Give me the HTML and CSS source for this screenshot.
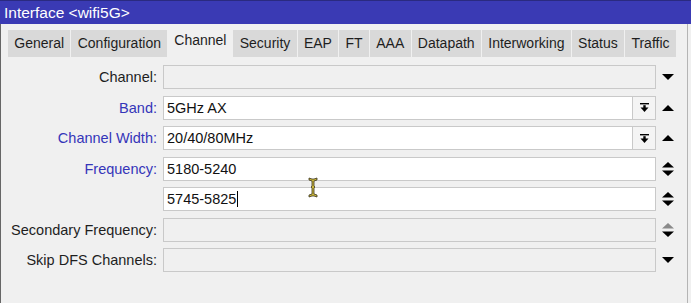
FILE: index.html
```html
<!DOCTYPE html>
<html>
  <head>
    <title>Interface &lt;wifi5G&gt;</title>
    <link rel="stylesheet" href="styles.css">
  </head>
  <body>
    <div class="titlebar">Interface &lt;wifi5G&gt;</div>

    <div class="window">
      <div class="tabs">
        <span class="tab">General</span>
        <span class="tab">Configuration</span>
        <span class="tab active">Channel</span>
        <span class="tab">Security</span>
        <span class="tab">EAP</span>
        <span class="tab">FT</span>
        <span class="tab">AAA</span>
        <span class="tab">Datapath</span>
        <span class="tab">Interworking</span>
        <span class="tab">Status</span>
        <span class="tab">Traffic</span>
      </div>

      <div class="form">
        <label>Channel:</label>
        <div class="field disabled"></div>
        <svg class="icon" viewBox="0 0 12 12"><polygon points="0,3 12,3 6,9" /></svg>

        <label class="blue">Band:</label>
        <div class="field">
          <span class="value">5GHz AX</span>
          <span class="drop">
            <svg viewBox="0 0 9 9"><rect x="0" y="0" width="9" height="1.4" /><rect x="3.3" y="2.2" width="2.4" height="3" /><polygon points="0.5,4.6 8.5,4.6 4.5,9" /></svg>
          </span>
        </div>
        <svg class="icon" viewBox="0 0 12 12"><polygon points="0,9 12,9 6,3" /></svg>

        <label class="blue">Channel Width:</label>
        <div class="field">
          <span class="value">20/40/80MHz</span>
          <span class="drop">
            <svg viewBox="0 0 9 9"><rect x="0" y="0" width="9" height="1.4" /><rect x="3.3" y="2.2" width="2.4" height="3" /><polygon points="0.5,4.6 8.5,4.6 4.5,9" /></svg>
          </span>
        </div>
        <svg class="icon" viewBox="0 0 12 12"><polygon points="0,9 12,9 6,3" /></svg>

        <label class="blue">Frequency:</label>
        <div class="field"><span class="value">5180-5240</span></div>
        <svg class="icon spin" viewBox="0 0 12 14"><polygon points="0,5.5 12,5.5 6,0" /><polygon points="0,8.5 12,8.5 6,14" /></svg>

        <label></label>
        <div class="field"><span class="value">5745-5825<i class="caret"></i></span></div>
        <svg class="icon spin" viewBox="0 0 12 14"><polygon points="0,5.5 12,5.5 6,0" /><polygon points="0,8.5 12,8.5 6,14" /></svg>

        <label>Secondary Frequency:</label>
        <div class="field disabled"></div>
        <svg class="icon spin" viewBox="0 0 12 14"><polygon class="dim" points="0,5.5 12,5.5 6,0" /><polygon points="0,8.5 12,8.5 6,14" /></svg>

        <label>Skip DFS Channels:</label>
        <div class="field disabled"></div>
        <svg class="icon" viewBox="0 0 12 12"><polygon points="0,3 12,3 6,9" /></svg>
      </div>
    </div>

    <!-- mouse pointer over the frequency fields -->
    <svg class="ibeam" viewBox="0 0 10 21">
      <path d="M1,1 L4,2 L6,2 L9,1 L9,3 L6,4 L6,9 L7,10 L6,11 L6,17 L9,18 L9,20 L6,19 L4,19 L1,20 L1,18 L4,17 L4,11 L3,10 L4,9 L4,4 L1,3 Z" />
    </svg>
  </body>
</html>
```

FILE: styles.css
```css
html,
body {
  margin: 0;
  width: 100%;
  height: 100%;
  overflow: hidden;
}

body {
  position: relative;
  background: #f0f0f0;
  font-family: 'Liberation Sans', Arial, sans-serif;
  font-size: 14px;
  color: #222;
}

.titlebar {
  height: 24px;
  line-height: 23px;
  padding-left: 4px;
  background: #3a3ab4;
  border-top: 1px solid #2a2a80;
  box-sizing: border-box;
  color: #fff;
  font-size: 15.5px;
}

.window {
  height: 279px;
  border-left: 1px solid #666;
  border-right: 1px solid #b4b4b4;
  width: 688px;
  box-sizing: border-box;
}

.tabs {
  display: flex;
  align-items: flex-end;
  height: 33px;
  padding-left: 7px;
}

.tab {
  height: 27px;
  line-height: 27px;
  padding: 0 6.3px;
  margin-right: 1px;
  background: #d9d9d9;
  color: #1e1e1e;
  white-space: nowrap;
}

.tab.active {
  height: 31px;
  line-height: 28px;
  background: #f0f0f0;
  margin: 0 0 0 -1px;
  padding: 0 7px;
}

.form {
  display: grid;
  grid-template-columns: 156px 493px 12px;
  grid-auto-rows: 24px;
  column-gap: 6px;
  row-gap: 6.5px;
  align-items: center;
  margin-top: 8px;
  font-size: 14.5px;
}

.form label {
  text-align: right;
  color: #1e1e1e;
}

.form label.blue {
  color: #3535b9;
}

.field {
  display: flex;
  height: 24px;
  box-sizing: border-box;
  border: 1px solid #c9c9c9;
  background: #fff;
}

.field.disabled {
  background: #f0f0f0;
}

.value {
  flex: 1;
  padding-left: 3px;
  line-height: 22px;
  color: #111;
}

.caret {
  display: inline-block;
  width: 1px;
  height: 16px;
  margin-left: 1px;
  vertical-align: -3px;
  background: #000;
}

.drop {
  width: 22px;
  border-left: 1px solid #c9c9c9;
  background: #f4f4f4;
  display: flex;
  align-items: center;
  justify-content: center;
}

.drop svg {
  width: 9px;
  height: 9px;
  fill: #000;
}

.icon {
  width: 12px;
  height: 12px;
  fill: #000;
}

.icon.spin {
  height: 14px;
}

.icon .dim {
  fill: #8a8a8a;
}

.ibeam {
  position: absolute;
  left: 308px;
  top: 177px;
  width: 10px;
  height: 21px;
  fill: #c8b43a;
  stroke: #3a3520;
  stroke-width: 0.8;
}
```
